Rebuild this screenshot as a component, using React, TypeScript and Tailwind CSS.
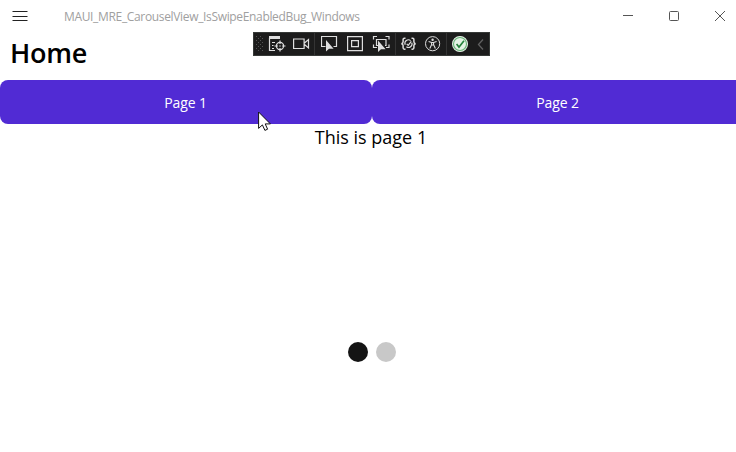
import React from "react";

type IconProps = { children: React.ReactNode; className?: string };

function Icon({ children, className = "" }: IconProps) {
  return (
    <svg width="18" height="18" viewBox="0 0 18 18" fill="none" stroke="#dedede" strokeWidth="1.2" className={`shrink-0 ${className}`}>
      {children}
    </svg>
  );
}

const POINTER = "M0 0V11.5L3 8.7H7.6Z";

function Separator({ className = "" }: { className?: string }) {
  return <div className={`h-[22px] w-px shrink-0 bg-[#343434] ${className}`} />;
}

function DebugToolbar() {
  return (
    <div className="absolute left-[253px] top-8 flex h-6 w-[237px] items-center border border-[#363937] bg-[#1c1c1c]">
      <svg width="9" height="18" viewBox="0 0 9 18" fill="#555" className="shrink-0">
        {[1, 5, 9, 13].map((y) => (
          <g key={y}>
            <rect x="2" y={y} width="1" height="1" />
            <rect x="6" y={y} width="1" height="1" />
            <rect x="4" y={y + 2} width="1" height="1" />
            <rect x="8" y={y + 2} width="1" height="1" />
          </g>
        ))}
      </svg>
      <Icon className="ml-[5px]">
        <path d="M1 1h11v3H1z" fill="#dedede" stroke="none" />
        <path d="M1.5 3v12.5H7M4 7.5h3M4 10.5h1.5M4 13.5h2" />
        <circle cx="12" cy="11" r="3.6" />
        <circle cx="12" cy="11" r=".7" fill="#dedede" stroke="none" />
        <path d="M12 5.5v3.5M12 13v3.5M6.5 11h3.5M14 11h3.5" />
      </Icon>
      <Icon className="ml-[7px]">
        <path d="M.6 4h10.5v9.5H.6zM11.5 8l4-3.5v8.5l-4-3.5" />
      </Icon>
      <Separator className="ml-[3px]" />
      <Icon className="ml-[6px]">
        <path d="M4.5 11.5h-4v-10h15v10h-3" />
        <path d={POINTER} transform="translate(5 5)" fill="#dedede" stroke="none" />
      </Icon>
      <Icon className="ml-[8px]">
        <path d="M.6 1.6h14.8v14H.6zM4.6 5.6h6.8v6H4.6z" />
      </Icon>
      <Icon className="ml-[7px]">
        <path d="M1.5 4.5V1.5H5M13.5 1.5H17V4.5M1.5 9.5v3H5M14 12.5h3V9.5M6 10.5H4.5V4.5h9.5v6H13" />
        <path d={POINTER} transform="translate(6 5.5)" fill="#dedede" stroke="none" />
      </Icon>
      <Separator className="ml-[5px]" />
      <Icon className="ml-[4px]">
        <path strokeWidth="1.5" d="M5.5 3.2H4.4Q3.1 3.2 3.1 4.6V6.8Q3.1 8.4 1.4 8.7Q3.1 9 3.1 10.6V12.8Q3.1 14.2 4.4 14.2H5.5M11.5 3.2h1.1Q13.9 3.2 13.9 4.6V6.8Q13.9 8.4 15.6 8.7Q13.9 9 13.9 10.6V12.8Q13.9 14.2 12.6 14.2H11.5" />
        <path strokeWidth="1.2" d="M10.6 5.6A3.5 3.5 0 0 0 5.2 9.7M6.4 11.7A3.5 3.5 0 0 0 11.8 7.7M6.7 8.8l1.5 1.6L11.3 6.3" />
      </Icon>
      <Icon className="ml-[7px]">
        <circle cx="7.6" cy="8.7" r="7.1" strokeWidth="1" />
        <circle cx="7.6" cy="4.8" r="1.2" fill="#dedede" stroke="none" />
        <path strokeWidth="1.1" d="M3.6 6.5l3 1h2l3-1M6.6 7.5v2.2L4.8 13.5M8.6 7.5v2.2l1.8 3.8M6.6 10h2" />
      </Icon>
      <Separator className="ml-[3px]" />
      <Icon className="ml-[5px]">
        <circle cx="8" cy="9" r="7.4" fill="#e4f4e5" stroke="#e3eee3" strokeWidth="1.2" />
        <circle cx="8" cy="9" r="6.5" fill="#e4f4e5" stroke="#68b278" strokeWidth="1.1" />
        <path d="M4.6 9l2.4 3.1L12 5.8" stroke="#25833c" strokeWidth="1.6" />
      </Icon>
      <svg width="7" height="12" viewBox="0 0 7 12" fill="none" stroke="#606060" strokeWidth="1.3" className="ml-[7px] shrink-0">
        <path d="M6 1.5L1.5 6.5L6 11.5" />
      </svg>
    </div>
  );
}

export default function App() {
  return (
    <div className="relative h-[452px] w-[736px] overflow-hidden bg-white font-['Open_Sans','Noto_Sans',sans-serif] text-black">
      <header className="flex h-8 items-center">
        <svg width="16" height="12" viewBox="0 0 16 12" stroke="#222" className="ml-3 shrink-0">
          <path d="M.5 1.5h15M.5 6.5h15M.5 10.5h15" />
        </svg>
        <span className="ml-9 mt-px whitespace-nowrap text-[12px] leading-4 tracking-[-0.34px] text-[#a0a0a0]">
          MAUI_MRE_CarouselView_IsSwipeEnabledBug_Windows
        </span>
        <svg width="102" height="12" viewBox="0 0 102 12" fill="none" stroke="#555" className="ml-auto mr-[11px] shrink-0">
          <path d="M0 5.5h10" />
          <rect x="46.5" y="1.5" width="9" height="9" rx="1" />
          <path d="M92 1l10 10M102 1L92 11" />
        </svg>
      </header>
      <h1 className="h-12 pl-[10px] pt-0.5 text-[27px] font-semibold leading-[38px] tracking-[-0.25px]">Home</h1>
      <nav className="flex h-11 w-[744px] text-[14px] tracking-[-0.1px] text-white">
        <button className="w-[372px] rounded-lg bg-[#512bd4] pr-px">Page 1</button>
        <button className="w-[372px] rounded-lg bg-[#512bd4] pr-px">Page 2</button>
      </nav>
      <main className="flex h-[218px] w-[742px] justify-center text-[18px] leading-[26px]">This is page 1</main>
      <div className="flex w-[744px] justify-center gap-2">
        <span className="size-5 rounded-full bg-[#141414]" />
        <span className="size-5 rounded-full bg-[#c8c8c8]" />
      </div>
      <DebugToolbar />
      <svg width="14" height="21" viewBox="0 0 14 21" className="absolute left-[258px] top-[111px]">
        <path d="M.6 1v16.4l3.8-3.5 2.5 5.5 2.7-1.2-2.4-5.3h5.2z" fill="#fff" stroke="#111" strokeWidth="1" />
      </svg>
    </div>
  );
}
